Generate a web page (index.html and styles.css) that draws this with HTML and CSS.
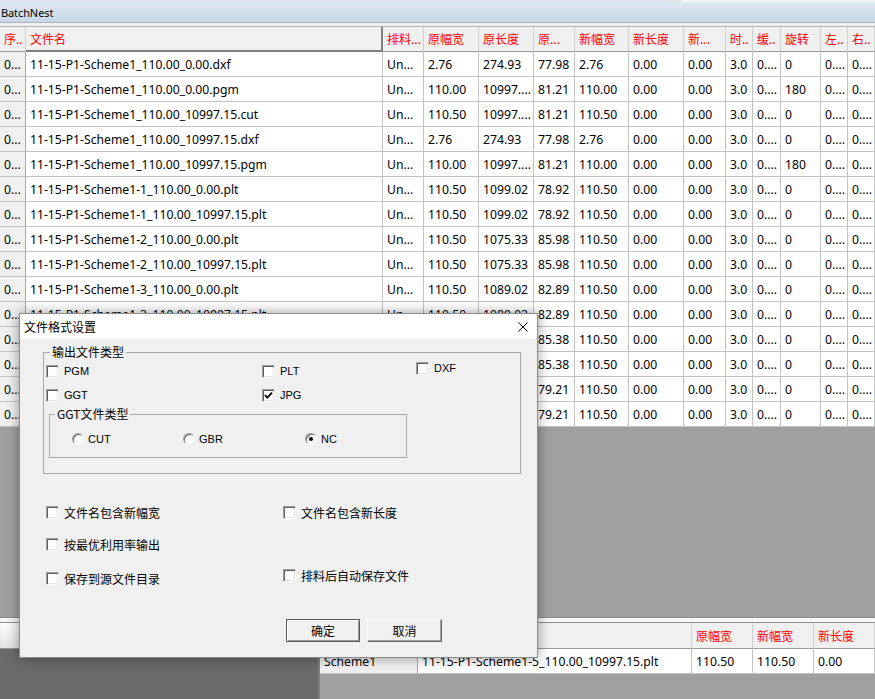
FILE: index.html
```html
<!DOCTYPE html>
<html lang="zh-CN">
<head>
<meta charset="utf-8">
<title>BatchNest</title>
<link rel="stylesheet" href="styles.css">
</head>
<body>
<div class="app">
  <div class="topstrip"></div>
  <div class="titlebar">BatchNest</div>
  <div class="sep"></div>

  <div class="main">
    <div class="row head">
      <div class="cell">序..</div><div class="cell hsel">文件名</div><div class="cell">排料...</div><div class="cell">原幅宽</div><div class="cell">原长度</div><div class="cell">原...</div><div class="cell">新幅宽</div><div class="cell">新长度</div><div class="cell">新...</div><div class="cell">时..</div><div class="cell">缓..</div><div class="cell">旋转</div><div class="cell">左..</div><div class="cell">右..</div>
    </div>
    <div class="row"><div class="cell rh">0...</div><div class="cell">11-15-P1-Scheme1_110.00_0.00.dxf</div><div class="cell">Un...</div><div class="cell">2.76</div><div class="cell">274.93</div><div class="cell">77.98</div><div class="cell">2.76</div><div class="cell">0.00</div><div class="cell">0.00</div><div class="cell">3.0</div><div class="cell">0....</div><div class="cell">0</div><div class="cell">0....</div><div class="cell">0....</div></div>
    <div class="row"><div class="cell rh">0...</div><div class="cell">11-15-P1-Scheme1_110.00_0.00.pgm</div><div class="cell">Un...</div><div class="cell">110.00</div><div class="cell">10997....</div><div class="cell">81.21</div><div class="cell">110.00</div><div class="cell">0.00</div><div class="cell">0.00</div><div class="cell">3.0</div><div class="cell">0....</div><div class="cell">180</div><div class="cell">0....</div><div class="cell">0....</div></div>
    <div class="row"><div class="cell rh">0...</div><div class="cell">11-15-P1-Scheme1_110.00_10997.15.cut</div><div class="cell">Un...</div><div class="cell">110.50</div><div class="cell">10997....</div><div class="cell">81.21</div><div class="cell">110.50</div><div class="cell">0.00</div><div class="cell">0.00</div><div class="cell">3.0</div><div class="cell">0....</div><div class="cell">0</div><div class="cell">0....</div><div class="cell">0....</div></div>
    <div class="row"><div class="cell rh">0...</div><div class="cell">11-15-P1-Scheme1_110.00_10997.15.dxf</div><div class="cell">Un...</div><div class="cell">2.76</div><div class="cell">274.93</div><div class="cell">77.98</div><div class="cell">2.76</div><div class="cell">0.00</div><div class="cell">0.00</div><div class="cell">3.0</div><div class="cell">0....</div><div class="cell">0</div><div class="cell">0....</div><div class="cell">0....</div></div>
    <div class="row"><div class="cell rh">0...</div><div class="cell">11-15-P1-Scheme1_110.00_10997.15.pgm</div><div class="cell">Un...</div><div class="cell">110.00</div><div class="cell">10997....</div><div class="cell">81.21</div><div class="cell">110.00</div><div class="cell">0.00</div><div class="cell">0.00</div><div class="cell">3.0</div><div class="cell">0....</div><div class="cell">180</div><div class="cell">0....</div><div class="cell">0....</div></div>
    <div class="row"><div class="cell rh">0...</div><div class="cell">11-15-P1-Scheme1-1_110.00_0.00.plt</div><div class="cell">Un...</div><div class="cell">110.50</div><div class="cell">1099.02</div><div class="cell">78.92</div><div class="cell">110.50</div><div class="cell">0.00</div><div class="cell">0.00</div><div class="cell">3.0</div><div class="cell">0....</div><div class="cell">0</div><div class="cell">0....</div><div class="cell">0....</div></div>
    <div class="row"><div class="cell rh">0...</div><div class="cell">11-15-P1-Scheme1-1_110.00_10997.15.plt</div><div class="cell">Un...</div><div class="cell">110.50</div><div class="cell">1099.02</div><div class="cell">78.92</div><div class="cell">110.50</div><div class="cell">0.00</div><div class="cell">0.00</div><div class="cell">3.0</div><div class="cell">0....</div><div class="cell">0</div><div class="cell">0....</div><div class="cell">0....</div></div>
    <div class="row"><div class="cell rh">0...</div><div class="cell">11-15-P1-Scheme1-2_110.00_0.00.plt</div><div class="cell">Un...</div><div class="cell">110.50</div><div class="cell">1075.33</div><div class="cell">85.98</div><div class="cell">110.50</div><div class="cell">0.00</div><div class="cell">0.00</div><div class="cell">3.0</div><div class="cell">0....</div><div class="cell">0</div><div class="cell">0....</div><div class="cell">0....</div></div>
    <div class="row"><div class="cell rh">0...</div><div class="cell">11-15-P1-Scheme1-2_110.00_10997.15.plt</div><div class="cell">Un...</div><div class="cell">110.50</div><div class="cell">1075.33</div><div class="cell">85.98</div><div class="cell">110.50</div><div class="cell">0.00</div><div class="cell">0.00</div><div class="cell">3.0</div><div class="cell">0....</div><div class="cell">0</div><div class="cell">0....</div><div class="cell">0....</div></div>
    <div class="row"><div class="cell rh">0...</div><div class="cell">11-15-P1-Scheme1-3_110.00_0.00.plt</div><div class="cell">Un...</div><div class="cell">110.50</div><div class="cell">1089.02</div><div class="cell">82.89</div><div class="cell">110.50</div><div class="cell">0.00</div><div class="cell">0.00</div><div class="cell">3.0</div><div class="cell">0....</div><div class="cell">0</div><div class="cell">0....</div><div class="cell">0....</div></div>
    <div class="row"><div class="cell rh">0...</div><div class="cell">11-15-P1-Scheme1-3_110.00_10997.15.plt</div><div class="cell">Un...</div><div class="cell">110.50</div><div class="cell">1089.02</div><div class="cell">82.89</div><div class="cell">110.50</div><div class="cell">0.00</div><div class="cell">0.00</div><div class="cell">3.0</div><div class="cell">0....</div><div class="cell">0</div><div class="cell">0....</div><div class="cell">0....</div></div>
    <div class="row"><div class="cell rh">0...</div><div class="cell">11-15-P1-Scheme1-4_110.00_0.00.plt</div><div class="cell">Un...</div><div class="cell">110.50</div><div class="cell">1086.71</div><div class="cell">85.38</div><div class="cell">110.50</div><div class="cell">0.00</div><div class="cell">0.00</div><div class="cell">3.0</div><div class="cell">0....</div><div class="cell">0</div><div class="cell">0....</div><div class="cell">0....</div></div>
    <div class="row"><div class="cell rh">0...</div><div class="cell">11-15-P1-Scheme1-4_110.00_10997.15.plt</div><div class="cell">Un...</div><div class="cell">110.50</div><div class="cell">1086.71</div><div class="cell">85.38</div><div class="cell">110.50</div><div class="cell">0.00</div><div class="cell">0.00</div><div class="cell">3.0</div><div class="cell">0....</div><div class="cell">0</div><div class="cell">0....</div><div class="cell">0....</div></div>
    <div class="row"><div class="cell rh">0...</div><div class="cell">11-15-P1-Scheme1-5_110.00_0.00.plt</div><div class="cell">Un...</div><div class="cell">110.50</div><div class="cell">1092.64</div><div class="cell">79.21</div><div class="cell">110.50</div><div class="cell">0.00</div><div class="cell">0.00</div><div class="cell">3.0</div><div class="cell">0....</div><div class="cell">0</div><div class="cell">0....</div><div class="cell">0....</div></div>
    <div class="row"><div class="cell rh">0...</div><div class="cell">11-15-P1-Scheme1-5_110.00_10997.15.plt</div><div class="cell">Un...</div><div class="cell">110.50</div><div class="cell">1092.64</div><div class="cell">79.21</div><div class="cell">110.50</div><div class="cell">0.00</div><div class="cell">0.00</div><div class="cell">3.0</div><div class="cell">0....</div><div class="cell">0</div><div class="cell">0....</div><div class="cell">0....</div></div>
  </div>

  <div class="bottom">
    <div class="splitter"></div>
    <div class="panes">
      <div class="bl">
        <div class="bl-head"></div>
        <div class="bl-body"></div>
      </div>
      <div class="br">
        <div class="brow bhead">
          <div class="cell"></div><div class="cell"></div><div class="cell">原幅宽</div><div class="cell">新幅宽</div><div class="cell">新长度</div>
        </div>
        <div class="brow">
          <div class="cell rh">Scheme1</div><div class="cell">11-15-P1-Scheme1-5_110.00_10997.15.plt</div><div class="cell">110.50</div><div class="cell">110.50</div><div class="cell">0.00</div>
        </div>
      </div>
    </div>
  </div>
</div>

<div class="dlg">
  <div class="dlg-title">
    <span>文件格式设置</span>
    <svg class="close" width="10" height="10" viewBox="0 0 10 10"><path d="M0.5 0.5 L9.5 9.5 M9.5 0.5 L0.5 9.5" stroke="#000" stroke-width="1" fill="none"/></svg>
  </div>
  <div class="dlg-body">
    <fieldset class="grp outer">
      <legend>输出文件类型</legend>
      <div class="types">
        <label class="cb"><span class="box"></span><span class="en">PGM</span></label>
        <label class="cb"><span class="box"></span><span class="en">PLT</span></label>
        <label class="cb up"><span class="box"></span><span class="en">DXF</span></label>
        <label class="cb"><span class="box"></span><span class="en">GGT</span></label>
        <label class="cb"><span class="box"><svg width="11" height="11" viewBox="0 0 11 11"><path d="M2 5 L4.3 7.6 L9 2.6" stroke="#000" stroke-width="1.8" fill="none"/></svg></span><span class="en">JPG</span></label>
      </div>
      <fieldset class="grp inner">
        <legend>GGT文件类型</legend>
        <div class="radios">
          <label class="rb"><span class="dot"></span><span class="en">CUT</span></label>
          <label class="rb"><span class="dot"></span><span class="en">GBR</span></label>
          <label class="rb"><span class="dot on"></span><span class="en">NC</span></label>
        </div>
      </fieldset>
    </fieldset>

    <div class="opts">
      <div class="opt-row">
        <label class="cb"><span class="box"></span><span>文件名包含新幅宽</span></label>
        <label class="cb"><span class="box"></span><span>文件名包含新长度</span></label>
      </div>
      <div class="opt-row r2">
        <label class="cb"><span class="box"></span><span>按最优利用率输出</span></label>
      </div>
      <div class="opt-row r3">
        <label class="cb"><span class="box"></span><span>保存到源文件目录</span></label>
        <label class="cb up"><span class="box"></span><span>排料后自动保存文件</span></label>
      </div>
    </div>

    <div class="btns">
      <div class="btn def">确定</div>
      <div class="btn">取消</div>
    </div>
  </div>
</div>
</body>
</html>
```

FILE: styles.css
```css
html, body {
  margin: 0;
  padding: 0;
}
body {
  width: 875px;
  height: 699px;
  overflow: hidden;
  position: relative;
  background: #a0a0a0;
  font-family: "Noto Sans", "Noto Sans CJK SC", sans-serif;
  font-size: 12px;
  color: #000;
}

.app {
  display: flex;
  flex-direction: column;
  height: 699px;
}

.topstrip {
  height: 2px;
  background: linear-gradient(to right, #e2e5eb 0, #e2e5eb 680px, #f2f3f6 682px);
}
.titlebar {
  height: 20px;
  box-sizing: border-box;
  background: linear-gradient(#e0e9f4, #c8d7e8);
  display: flex;
  align-items: center;
  padding-left: 1px;
  font-family: "Noto Sans", sans-serif;
  font-size: 11px;
  letter-spacing: -0.1px;
}
.sep {
  height: 5px;
  box-sizing: border-box;
  background: #f0f0f0;
  border-top: 1px solid #aab3bd;
  border-bottom: 1px solid #b4b4b4;
}

.main {
  flex: 1;
  background: #a0a0a0;
}

.row {
  display: grid;
  grid-template-columns: 26px 357px 41px 55px 55px 41px 54px 55px 42px 27px 28px 40px 27px 27px;
  height: 25px;
}
.cell {
  box-sizing: border-box;
  height: 25px;
  border-right: 1px solid #c3c3c3;
  border-bottom: 1px solid #c3c3c3;
  background: #fff;
  padding-left: 4px;
  line-height: 25px;
  font-size: 12.2px;
  white-space: nowrap;
  overflow: hidden;
}
.cell.rh {
  background: #f0f0f0;
  border-right-color: #a8a8a8;
}
.head .cell {
  background: #f0f0f0;
  color: #ff0000;
  font-family: "Noto Sans CJK SC", sans-serif;
  font-size: 12px;
  line-height: 24px;
  border-bottom: 1px solid #9c9c9c;
  border-right-color: #d0d0d0;
}
.head .cell.hsel {
  border-right: 2px solid #808080;
  border-bottom: 2px solid #808080;
}

/* bottom area */
.bottom {
  height: 82px;
  display: flex;
  flex-direction: column;
}
.splitter {
  height: 6px;
  box-sizing: border-box;
  background: #f6f6f6;
  border-top: 1px solid #8e8e8e;
  border-bottom: 1px solid #8e8e8e;
}
.panes {
  flex: 1;
  display: flex;
}
.bl {
  width: 318px;
  display: flex;
  flex-direction: column;
}
.bl-head {
  height: 26px;
  box-sizing: border-box;
  background: linear-gradient(#fdfdfd, #e2e2e2);
  border-bottom: 1px solid #9a9a9a;
}
.bl-body {
  flex: 1;
  background: #6a6a6a;
}
.br {
  flex: 1;
  box-sizing: border-box;
  border-left: 2px solid #808080;
  background: #a0a0a0;
}
.brow {
  display: grid;
  grid-template-columns: 98px 274px 61px 61px 1fr;
}
.bhead .cell {
  height: 26px;
  line-height: 26px;
  font-size: 12px;
  background: #f0f0f0;
  color: #ff0000;
  font-family: "Noto Sans CJK SC", sans-serif;
  border-bottom-color: #9c9c9c;
  border-right-color: #d0d0d0;
}

/* dialog window */
.dlg {
  position: absolute;
  left: 19px;
  top: 313px;
  width: 519px;
  height: 345px;
  box-sizing: border-box;
  border: 1px solid #8c8c8c;
  background: #f0f0f0;
  box-shadow: 0 0 12px rgba(0, 0, 0, 0.4);
  display: flex;
  flex-direction: column;
  font-family: "Noto Sans CJK SC", sans-serif;
  font-size: 12px;
  color: #000;
}
.dlg-title {
  height: 25px;
  flex: none;
  background: #fff;
  display: flex;
  align-items: center;
  justify-content: space-between;
  padding: 0 9px 0 4px;
}
.close {
  display: block;
}
.dlg-body {
  flex: 1;
  padding: 6px 0 0 23px;
}

.grp {
  margin: 0;
  padding: 0;
  border: 1px solid #a8a8a8;
  min-inline-size: 0;
}
.grp legend {
  padding: 0 2px;
  line-height: 14px;
  font-size: 12px;
}
.grp.outer {
  width: 478px;
  box-sizing: border-box;
  padding: 0 0 15px 2px;
}
.grp.outer > legend {
  margin-left: 4px;
}
.grp.inner {
  width: 358px;
  box-sizing: border-box;
  margin: 5px 0 0 3px;
  padding: 0 0 12px 0;
}
.grp.inner > legend {
  margin-left: 5px;
}

.en {
  font-family: "Liberation Sans", Arial, sans-serif;
  font-size: 11px;
}

.types {
  display: grid;
  grid-template-columns: 216px 154px 1fr;
  grid-template-rows: 13px 13px;
  row-gap: 11px;
  padding-top: 6px;
}

.cb {
  display: flex;
  align-items: center;
  gap: 5px;
  height: 13px;
  line-height: 13px;
  white-space: nowrap;
}
.cb.up {
  margin-top: -3px;
}
.box {
  flex: none;
  width: 13px;
  height: 13px;
  box-sizing: border-box;
  background: #fff;
  border: 1px solid;
  border-color: #a0a0a0 #ffffff #ffffff #a0a0a0;
  box-shadow: inset 1px 1px #5f5f5f, inset -1px -1px #e3e3e3;
  display: flex;
  align-items: center;
  justify-content: center;
}
.box svg {
  display: block;
}

.radios {
  display: grid;
  grid-template-columns: 111px 122px 1fr;
  padding: 12px 0 0 22px;
}
.rb {
  display: flex;
  align-items: center;
  gap: 4px;
  height: 12px;
  line-height: 12px;
}
.dot {
  flex: none;
  width: 12px;
  height: 12px;
  box-sizing: border-box;
  border-radius: 50%;
  background: #fff;
  border: 1px solid;
  border-color: #9a9a9a #f4f4f4 #f4f4f4 #9a9a9a;
  box-shadow: inset 1px 1px #6a6a6a;
  display: flex;
  align-items: center;
  justify-content: center;
}
.dot.on::after {
  content: "";
  width: 4px;
  height: 4px;
  border-radius: 50%;
  background: #000;
}

.opts {
  margin: 32px 0 0 3px;
}
.opt-row {
  display: grid;
  grid-template-columns: 237px 1fr;
  height: 13px;
}
.opt-row.r2 {
  margin-top: 19px;
}
.opt-row.r3 {
  margin-top: 21px;
}

.btns {
  display: flex;
  gap: 7px;
  margin: 34px 0 0 243px;
}
.btn {
  width: 75px;
  height: 23px;
  box-sizing: border-box;
  display: flex;
  align-items: center;
  justify-content: center;
  background: #f0f0f0;
  border: 1px solid;
  border-color: #ffffff #6a6a6a #6a6a6a #ffffff;
  box-shadow: inset -1px -1px #a0a0a0;
  line-height: 14px;
}
.btn.def {
  width: 74px;
  border: 1px solid #5a5a5a;
  box-shadow: inset 1px 1px #ffffff, inset -1px -1px #9a9a9a;
}
```
